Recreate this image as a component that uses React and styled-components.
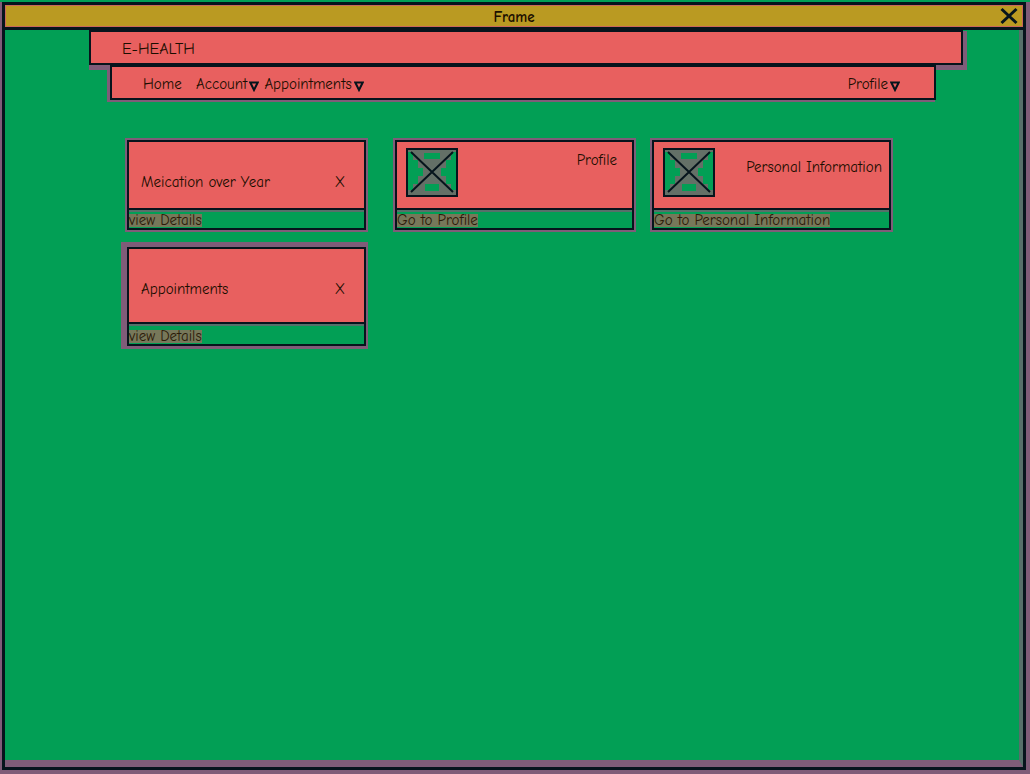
import React from "react";
import styled, { createGlobalStyle } from "styled-components";

const ink = "#06141c";
const green = "#029f55";
const coral = "#e8605f";
const gold = "#ba9a22";
const plum = "#7f5c78";
const haze = "#56706a";
const text = "#1a0e00";

const GlobalStyle = createGlobalStyle`
  * { box-sizing: border-box; }
  body {
    margin: 0;
    background: ${plum};
    color: ${text};
    font-family: "Comic Sans MS", "Comic Neue", "Open Sans", sans-serif;
    font-size: 15px;
    line-height: 20px;
  }
`;

const Page = styled.div`
  display: flex;
  min-height: 100vh;
  padding: 0 4px 4px 2px;
  border-top: 2px solid ${green};
`;

const Window = styled.div`
  flex: 1;
  display: flex;
  flex-direction: column;
  border: 3px solid ${ink};
`;

const TitleBar = styled.header`
  display: grid;
  grid-template-columns: 28px 1fr 28px;
  align-items: center;
  height: 25px;
  background: ${gold};
  border-bottom: 3px solid ${ink};
  box-shadow: inset 0 0 0 1px #c9685a;
`;

const Title = styled.h1`
  grid-column: 2;
  margin: 0;
  padding-top: 2px;
  font-size: 15px;
  line-height: 20px;
  font-weight: 700;
  color: #1c1000;
  text-align: center;
`;

const CloseButton = styled.button`
  display: flex;
  justify-content: center;
  padding: 0;
  border: 0;
  background: none;
  color: ${ink};
`;

const Body = styled.main`
  flex: 1;
  padding: 0 56px 0 84px;
  background: ${green};
  border-right: 4px solid ${haze};
  border-bottom: 7px solid ${plum};
`;

const Brand = styled.div`
  height: 35px;
  padding: 7px 31px;
  border: 2px solid ${ink};
  background: ${coral};
  box-shadow: 2px 3px 0 2px ${plum};
  font-size: 16px;
`;

const Nav = styled.nav`
  position: relative;
  display: flex;
  align-items: center;
  height: 35px;
  margin: 0 27px 0 21px;
  padding: 2px 34px 0 31px;
  border: 2px solid ${ink};
  background: ${coral};
  box-shadow: -2px 1px 0 1px ${plum};
`;

const HomeLink = styled.a`
  width: 53px;
  color: inherit;
  text-decoration: none;
`;

const MenuButton = styled.button`
  display: flex;
  align-items: center;
  gap: 2px;
  padding: 0;
  border: 0;
  margin-left: ${(p) => (p.$end ? "auto" : "0")};
  margin-right: ${(p) => (p.$end ? "0" : "5px")};
  background: none;
  color: inherit;
  font: inherit;

  svg { margin-top: 5px; }
`;

const Cards = styled.div`
  display: flex;
  align-items: flex-start;
  gap: 18px;
  margin: 40px 72px 0 38px;
`;

const Column = styled.div`
  flex: 1;
  min-width: 0;
  display: flex;
  flex-direction: column;
  gap: 17px;
  margin-right: ${(p) => (p.$wide ? "11px" : "0")};
`;

const Card = styled.section`
  border: 2px solid ${ink};
  background: ${green};
  box-shadow: ${(p) => (p.$tall ? "-2px -1px 0 4px" : "0 0 0 2px")} ${plum};
`;

const CardTop = styled.div`
  display: flex;
  justify-content: space-between;
  align-items: ${(p) => (p.$media ? "flex-start" : "center")};
  height: ${(p) => (p.$tall ? "75px" : "68px")};
  padding: ${(p) =>
    p.$media ? "6px 7px 0 9px" : p.$tall ? "6px 19px 0 12px" : "14px 19px 0 12px"};
  background: ${coral};
  border-bottom: 2px solid ${ink};
`;

const CardTitle = styled.h2`
  margin: ${(p) => p.$inset || "0"};
  font-size: 15px;
  line-height: 20px;
  font-weight: 400;
`;

const DetailLink = styled.a`
  display: block;
  height: ${(p) => (p.$tall ? "20px" : "18px")};
  line-height: ${(p) => (p.$tall ? "24px" : "20px")};
  color: #2b1a08;
  text-decoration: none;
  box-shadow: inset 0 2px 0 ${haze};

  span {
    background: linear-gradient(transparent 3px, #77785a 3px, #77785a 16px, transparent 16px);
  }
`;

const Caret = () => (
  <svg width="10" height="11" viewBox="0 0 10 11" aria-hidden="true">
    <path d="M1.3 1.5H8.7L5 9Z" fill="none" stroke={ink} strokeWidth="2" />
  </svg>
);

const Placeholder = () => (
  <svg width="52" height="49" viewBox="0 0 52 49" aria-hidden="true">
    <rect x="1" y="1" width="50" height="47" fill={green} stroke={ink} strokeWidth="2" />
    <path
      d="M2 2H50V4H45V12H40V20H35V28H40V36H45V42H50V47H2V42H7V36H12V28H17V20H12V12H7V4H2Z"
      fill="#647067"
    />
    <path d="M18 5H34V11H18ZM19 36H33V43H19Z" fill={green} />
    <path d="M5 4L47 44M47 4L5 44" stroke={ink} strokeWidth="2" />
  </svg>
);

const Count = styled.span``;

function SummaryCard({ title, tall }) {
  return (
    <Card $tall={tall}>
      <CardTop $tall={tall}>
        <CardTitle>{title}</CardTitle>
        <Count>X</Count>
      </CardTop>
      <DetailLink href="#" $tall={tall}><span>view Details</span></DetailLink>
    </Card>
  );
}

function LinkCard({ title, inset }) {
  return (
    <Card>
      <CardTop $media>
        <Placeholder />
        <CardTitle $inset={inset}>{title}</CardTitle>
      </CardTop>
      <DetailLink href="#"><span>Go to {title}</span></DetailLink>
    </Card>
  );
}

export default function App() {
  return (
    <>
      <GlobalStyle />
      <Page>
        <Window>
          <TitleBar>
            <Title>Frame</Title>
            <CloseButton aria-label="Close">
              <svg width="18" height="18" viewBox="0 0 18 18" aria-hidden="true">
                <path d="M1.5 2L16.5 16M16.5 2L1.5 16" stroke={ink} strokeWidth="3" />
              </svg>
            </CloseButton>
          </TitleBar>
          <Body>
            <Brand>E-HEALTH</Brand>
            <Nav>
              <HomeLink href="#">Home</HomeLink>
              <MenuButton>Account<Caret /></MenuButton>
              <MenuButton>Appointments<Caret /></MenuButton>
              <MenuButton $end>Profile<Caret /></MenuButton>
            </Nav>
            <Cards>
              <Column $wide>
                <SummaryCard title="Meication over Year" />
                <SummaryCard title="Appointments" tall />
              </Column>
              <Column>
                <LinkCard title="Profile" inset="2px 8px 0 0" />
              </Column>
              <Column>
                <LinkCard title="Personal Information" inset="9px 0 0 0" />
              </Column>
            </Cards>
          </Body>
        </Window>
      </Page>
    </>
  );
}
